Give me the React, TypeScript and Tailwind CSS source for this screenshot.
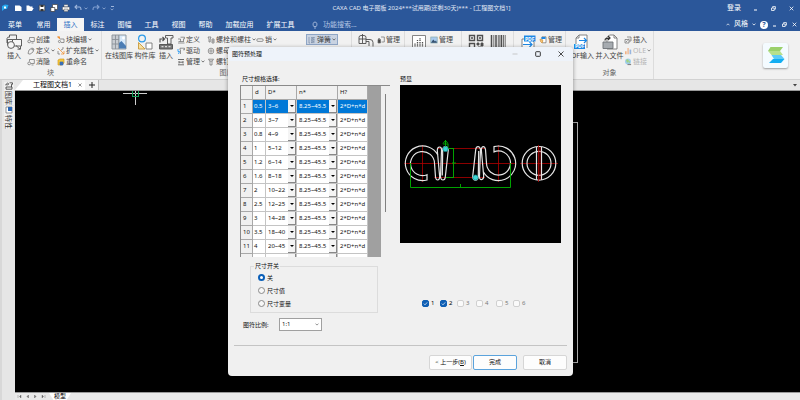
import React from "react";

type IconProps = { children: React.ReactNode; size?: string; box?: string };

const Glyph = ({ children, size = "size-[8px]", box = "0 0 8 8" }: IconProps) => (
  <svg viewBox={box} className={`${size} shrink-0`} fill="none" stroke="#6b6b6b" strokeWidth="0.7" aria-hidden="true">
    {children}
  </svg>
);

const Chevron = ({ className = "text-[#555]" }: { className?: string }) => (
  <svg viewBox="0 0 4 3" className={`w-[4px] h-[3px] shrink-0 ${className}`} fill="none" stroke="currentColor" strokeWidth="0.8" aria-hidden="true">
    <path d="M.5 .6 2 2.1 3.5 .6" />
  </svg>
);

const icons = {
  create: (
    <Glyph>
      <path d="M2.500 3.500V1.500h4.800v4H4" />
      <circle cx="2.2" cy="5.4" r="1.4" />
      <path d="M4.500 7h2" />
    </Glyph>
  ),
  define: (
    <Glyph>
      <path d="M1 6.5 2 3l3-2 2 1-1 3-3 2.2z" />
      <circle cx="5.3" cy="2.5" r=".5" />
    </Glyph>
  ),
  blockEdit: (
    <Glyph>
      <path d="M3 3h4v3.5H4" />
      <circle cx="2.5" cy="5.5" r="1.1" />
      <path d="M.5.8h2v2z" fill="#f08a24" stroke="#f08a24" />
    </Glyph>
  ),
  attrs: (
    <Glyph>
      <path d="M1 1l6 6M7 4v3H4" stroke="#f08a24" />
      <path d="M5 1h2M1 4v3h2M4 3l2-1" />
    </Glyph>
  ),
  rename: (
    <Glyph>
      <path d="M1 2l2-1h4v4l-2 2H1z" fill="#f5c83a" stroke="#d79b1f" />
      <path d="M3 4h3v3H3z" fill="#3b6fb6" stroke="#3b6fb6" />
    </Glyph>
  ),
  libDefine: (
    <Glyph>
      <path d="M1 7h6.500M1.500 5.500h5.500M3.500 5.500V3M3.500 1.200h4v1.600h-1v2.500M1 3h2.500" />
    </Glyph>
  ),
  drive: (
    <Glyph>
      <path d="M3.500 7V3.200H3V1.200h4.500v1.600H6" />
      <path d="M1 2v2.500h1.500L1.500 7" stroke="#3ba1f2" strokeWidth="1" />
    </Glyph>
  ),
  manage: (
    <Glyph>
      <path d="M1 1.500h6M1 6.8h6M2 3v2.5M6 3v2.5M2 4.2h4" strokeWidth="1" />
    </Glyph>
  ),
  bolt: (
    <Glyph>
      <path d="M1 1h3L3.2 3v3M1 1l1 2v3h1.2M5 3h2v4H5zM5 5h2" />
    </Glyph>
  ),
  nut: (
    <Glyph>
      <circle cx="4" cy="4" r="2.8" />
      <circle cx="4" cy="4" r="1.2" />
    </Glyph>
  ),
  screw: (
    <Glyph>
      <path d="M1.5 1.2h5L5.3 3H2.7zM3 3v4h2V3" />
    </Glyph>
  ),
  pin: (
    <Glyph>
      <rect x=".8" y="2.8" width="6.4" height="2.6" rx="1.2" />
    </Glyph>
  ),
  spring: (
    <Glyph>
      <path d="M1 1v6h1M3 1.5h3.5L3 3.2h3.5L3 5h3.5L3 6.6h3.5" stroke="#7b8ea6" />
    </Glyph>
  ),
  doc: (
    <Glyph>
      <path d="M4 1h3.300v5H4.500M3 2.500H1.500v2" />
      <path d="M1 3.500h2.500V7H1z" fill="#444" />
    </Glyph>
  ),
  image: (
    <Glyph>
      <rect x=".8" y="1" width="6.4" height="6" fill="#a9cbee" stroke="#8aa" />
      <path d="M1 6.8 3.2 3.6 5 5.6l1-1 1 2.2z" fill="#35506e" stroke="none" />
    </Glyph>
  ),
  pdfManage: (
    <Glyph>
      <path d="M3 .8h4v6H3z" fill="#fff" />
      <path d="M2.5 1h4v2h-4z" fill="#1e88e5" stroke="none" />
      <path d="M1 3l3 1.5L3 7 1.5 5.5z" fill="#f6c27a" stroke="#d99a3a" />
    </Glyph>
  ),
  insertObj: (
    <Glyph>
      <path d="M3 1h4v4H5M1 3.5h4V7H1z" />
      <path d="M2 6l1.5-1.5M5 2.5l1 1" />
    </Glyph>
  ),
  ole: (
    <Glyph>
      <path d="M1 4.2h1.6v3H1z" fill="#f2a36b" stroke="none" />
      <path d="M3.3 1h1.6v6.2H3.3z" fill="#efb48b" stroke="none" />
      <path d="M5.6 2.6h1.6v4.6H5.6z" fill="#82a8dc" stroke="none" />
    </Glyph>
  ),
  link: (
    <Glyph>
      <circle cx="4" cy="3.6" r="3" fill="#8cc6ee" stroke="none" />
      <path d="M2 2l2-1 1 2-2 2zM4 4l2-1v2z" fill="#8ecb6a" stroke="none" />
      <path d="M3.5 6.5h3.6" strokeWidth="1.2" />
    </Glyph>
  ),
};

const BigGlyph = ({ children }: { children: React.ReactNode }) => (
  <svg viewBox="0 0 16 16" className="size-[16px] shrink-0" fill="none" stroke="#4f4f4f" strokeWidth="0.9" aria-hidden="true">
    {children}
  </svg>
);

const big = {
  block: (
    <BigGlyph>
      <path d="M1 9V4.500A2 2 0 0 1 3 3M3.500 3.500V1h7v4" />
      <path d="M6.500 5.500h9V12h-9z" fill="#f6f6f6" />
      <path d="M1.500 5.500h5v5h-5z" fill="#f6f6f6" />
      <circle cx="5" cy="11" r="3.400" fill="#f6f6f6" />
      <path d="M10 11.500 14 15.200M11.500 15.200H14.500v-3" />
    </BigGlyph>
  ),
  online: (
    <BigGlyph>
      <path d="M1 1h7v14H1z" fill="#c9cdd2" stroke="#8b9299" />
      <path d="M1 5.500h7M1 10h7M4.500 1v14" stroke="#8b9299" />
      <path d="M8 1h7v14H8z" fill="#d7e9fa" stroke="#8b9299" />
      <path d="M8 14.500V9l2.500-2L15 12v2.500z" fill="#4c7db4" stroke="none" />
      <circle cx="12.500" cy="4" r="1.400" fill="#fff" stroke="none" />
    </BigGlyph>
  ),
  parts: (
    <BigGlyph>
      <circle cx="5" cy="4.500" r="3.400" stroke="#2d9be8" strokeWidth="1.200" />
      <path d="M1.500 8.500v6.500H8z" fill="#f7dfa0" stroke="#c89a3a" />
      <path d="M9 9h6v6H9z" fill="#fff" stroke="#777" />
    </BigGlyph>
  ),
  libInsert: (
    <BigGlyph>
      <path d="M2 8.500V5h4M4.500 3 6.500 5l-2 2" strokeWidth="1.100" />
      <path d="M7.500 1.500H15V4h-2v6H9.500V4h-2z" />
      <path d="M1.500 10.500h13v4.500h-13z" fill="#777" />
      <path d="M3.500 12.700h2M7 12.700h2M10.500 12.700h2" stroke="#fff" />
    </BigGlyph>
  ),
  part: (
    <BigGlyph>
      <path d="M1 9.500V3.500A2 2 0 0 1 3 1.500h3a2 2 0 0 1 2 2v6M1 5h7M4.500 0v9M8 5.500h4a3 3 0 0 1 3 3v4M1 9.500h7M8 7.500h3V12" />
    </BigGlyph>
  ),
  chart: (
    <BigGlyph>
      <path d="M1.500 1.500h13v13h-13z" fill="#fff" stroke="#777" />
      <path d="M4 14V9M6.500 14V6M9 14V4M11.500 14V8" strokeWidth="1.300" strokeDasharray="1.500 .8" />
    </BigGlyph>
  ),
  qr: (
    <BigGlyph>
      <path d="M1.500 1.500h5v5h-5zM9.500 1.500h5v5h-5zM1.500 9.500h5v5h-5z" strokeWidth="1.400" />
      <path d="M3.500 3.500h1v1h-1zM11.500 3.500h1v1h-1zM9 9h2v2H9zM13 9h2v3h-2zM10 13h3v2h-3z" fill="#4f4f4f" />
    </BigGlyph>
  ),
  barcode: (
    <BigGlyph>
      <path d="M1.500 1v14M6 1v14M11.500 1v14" strokeWidth="1.500" />
      <path d="M3.800 1v14M8.300 1v14M9.800 1v14M13.500 1v14M15.200 1v14" strokeWidth=".8" />
    </BigGlyph>
  ),
  pdf: (
    <BigGlyph>
      <path d="M2 5h9l3 3v7H2z" fill="#fff" stroke="#777" />
      <path d="M4 1.500h11.500v6H4z" fill="#1e88e5" stroke="none" />
      <text x="5" y="6.500" fontSize="5" fontWeight="700" fill="#fff" stroke="none">PDF</text>
      <path d="M3 10.500h9M9.500 8l2.500 2.500L9.500 13" stroke="#1e88e5" strokeWidth="1.200" />
    </BigGlyph>
  ),
  pdfIn: (
    <BigGlyph>
      <path d="M3 14V4l3-3h8v13" fill="#fff" stroke="#777" />
      <path d="M3 4h3V1" stroke="#777" />
      <path d="M6 6.500h7M11 4l2.500 2.500L11 9" stroke="#1e88e5" strokeWidth="1.200" />
      <path d="M1 10h11v5H1z" fill="#1e88e5" stroke="none" />
      <text x="2" y="14.300" fontSize="5" fontWeight="700" fill="#fff" stroke="none">PDF</text>
    </BigGlyph>
  ),
  merge: (
    <BigGlyph>
      <path d="M5 14V3.500L7.500 1H12l3 3v11H5" fill="#fff" stroke="#777" />
      <path d="M12 1v3h3" stroke="#777" />
      <path d="M3 6.500C3 4 5 4 8 4M6 2l2 2-2 2" strokeWidth="1.200" stroke="#333" />
      <path d="M1 8h10v6.500H1z" fill="#a6abb0" stroke="#6d7276" />
    </BigGlyph>
  ),
};

type ToolProps = { icon: React.ReactNode; label?: string; menu?: boolean; disabled?: boolean; active?: boolean };

const Tool = ({ icon, label, menu, disabled, active }: ToolProps) => (
  <button
    type="button"
    disabled={disabled}
    className={`flex h-[11px] items-center gap-px whitespace-nowrap text-[7px] leading-[11px] ${
      disabled ? "text-[#a8a8a8] opacity-80" : "text-[#444]"
    } ${active ? "border border-[#8fa6c6] bg-[#c9d3e2] px-px" : ""}`}
  >
    {icon}
    {label && <span>{label}</span>}
    {menu && <Chevron />}
  </button>
);

const BigTool = ({ icon, label, width }: { icon: React.ReactNode; label?: string; width: string }) => (
  <button
    type="button"
    className={`flex h-[33px] shrink-0 flex-col items-center gap-[1px] whitespace-nowrap text-[7px] leading-[9px] text-[#444] ${width}`}
  >
    {icon}
    <span>{label}</span>
  </button>
);

const Column = ({ children }: { children: React.ReactNode }) => <div className="flex shrink-0 flex-col items-start">{children}</div>;

const Group = ({ children, title, className }: { children: React.ReactNode; title?: string; className: string }) => (
  <section className={`flex shrink-0 flex-col border-r border-[#dcdcdc] pt-[3px] ${className}`}>
    <div className="flex h-[33px]">{children}</div>
    <div className="h-[12px] text-center text-[7px] leading-[12px] text-[#666]">{title}</div>
  </section>
);

const QuickAccess = () => (
  <div className="flex items-center gap-[4px]" aria-label="快速访问">
    <span className="mr-px">
      <Glyph>
        <path d="M1 7V2l3-1.500L7.500 1 6 5 3.500 5z" fill="#25a8f0" stroke="none" />
        <path d="M3 2.500h2v2H3z" fill="#fff" stroke="none" />
      </Glyph>
    </span>
    <Glyph>
      <path d="M1 1.500h4.500L7.500 3v4H1z" fill="#fff" stroke="none" />
    </Glyph>
    <Glyph>
      <path d="M.5 7V1.500h2.500l1 1h2.500V4h1.200L6 7z" fill="#fff" stroke="none" />
    </Glyph>
    <Glyph>
      <path d="M1.200 1.200h5.600v5.600H1.200z" fill="#fff" stroke="#333" />
      <path d="M2.500 1h3v2h-3zM2.500 5h3v2h-3z" fill="#333" stroke="none" />
    </Glyph>
    <Glyph>
      <path d="M2.500.5h5v5h-5z" fill="#fff" stroke="#444" />
      <path d="M.8 3.500h4v4h-4z" fill="#fff" stroke="#333" />
    </Glyph>
    <Glyph>
      <path d="M2 .8h4v2H2zM.5 3h7v3h-7zM2 5h4v2.500H2z" fill="#fff" stroke="#444" strokeWidth=".4" />
    </Glyph>
    <span className="flex items-center gap-[2px]">
      <Glyph>
        <path d="M3 1 1 3l2 2M1 3h4.500Q7 3 7 6" stroke="#9db5dc" strokeWidth="1.100" />
      </Glyph>
      <Chevron className="text-[#9db5dc]" />
    </span>
    <span className="flex items-center gap-[2px]">
      <Glyph>
        <path d="m5 1 2 2-2 2M7 3H2.500Q1 3 1 6" stroke="#7f9dcf" strokeWidth="1.100" />
      </Glyph>
      <Chevron className="text-[#9db5dc]" />
    </span>
    <span className="flex flex-col items-center gap-px">
      <span className="h-px w-[3px] bg-[#9db5dc]" />
      <Chevron className="text-[#9db5dc]" />
    </span>
  </div>
);

const WindowButtons = ({ className }: { className: string }) => (
  <div className={`flex items-center text-white ${className}`}>
    <button type="button" aria-label="最小化"><svg viewBox="0 0 5 5" className="size-[5px]" stroke="currentColor"><path d="M1 4h3" /></svg></button>
    <button type="button" aria-label="还原"><svg viewBox="0 0 5 5" className="size-[5px]" fill="none" stroke="currentColor" strokeWidth=".8"><path d="M.5 2h2.700v2.500H.5zM1.600 1.800V.6h2.800v2.600h-1" /></svg></button>
    <button type="button" aria-label="关闭"><svg viewBox="0 0 5 5" className="size-[5px]" stroke="currentColor" strokeWidth=".8"><path d="m.7.7 3.600 3.600M4.300.7.7 4.300" /></svg></button>
  </div>
);

const menuTabs = [
  { name: "菜单", width: "w-[30px]" },
  { name: "常用", width: "w-[27px]" },
  { name: "插入", width: "w-[27px]", active: true },
  { name: "标注", width: "w-[27px]" },
  { name: "图幅", width: "w-[27px]" },
  { name: "工具", width: "w-[27px]" },
  { name: "视图", width: "w-[27px]" },
  { name: "帮助", width: "w-[27px]" },
  { name: "加载应用", width: "w-[41px]" },
  { name: "扩展工具", width: "w-[41px]" },
];

const Header = () => (
  <header className="bg-[#2b579a] text-white">
    <div className="grid h-[14px] grid-cols-[1fr_auto_1fr] items-center pt-[2px] pl-px text-[7px]">
      <QuickAccess />
      <h1 className="whitespace-nowrap pl-[42px] text-[6px] text-[#e2e9f5]">CAXA CAD 电子图板 2024***试用期(还剩30天)*** - [工程图文档1]</h1>
      <div className="flex items-center justify-end gap-[12px] pr-[6px]">
        <button type="button">登录</button>
        <WindowButtons className="gap-[13px]" />
      </div>
    </div>
    <div className="flex h-[17px] items-end text-[7px]">
      <nav className="flex">
        {menuTabs.map((t) => (
          <button
            key={t.name}
            type="button"
            className={`h-[13px] text-center leading-[13px] ${t.width} ${t.active ? "bg-[#f5f5f5] text-[#2b6fc4]" : ""}`}
          >
            {t.name}
          </button>
        ))}
      </nav>
      <label className="flex h-[13px] flex-1 items-center gap-[4px] pl-[10px]">
        <Glyph>
          <path d="M2.800 5.500C1.500 4.200 1.800 1 4 1s2.500 3.200 1.200 4.500zM3 7h2" stroke="#c8d6ec" />
        </Glyph>
        <input type="text" placeholder="功能搜索..." className="w-[60px] bg-transparent text-[7px] leading-[9px] outline-none placeholder:text-[#b4c6e4]" />
      </label>
      <div className="flex h-[13px] items-center gap-[4px] pr-[3px]">
        <svg viewBox="0 0 4 3" className="h-[3px] w-[4px]" fill="none" stroke="#fff" strokeWidth=".7"><path d="M.5 2.300 2 .8l1.500 1.500" /></svg>
        <button type="button" className="flex items-center gap-[4px]">风格<Chevron className="text-white" /></button>
        <button type="button" className="flex size-[8px] items-center justify-center rounded-full bg-white text-[7px] font-bold leading-[8px] text-[#2b579a]">?</button>
        <WindowButtons className="gap-[5px]" />
      </div>
    </div>
  </header>
);

const Ribbon = () => (
  <div className="flex h-[49px] overflow-hidden border-b border-[#d2d2d2] bg-[#f1f1f1]">
    <Group title="块" className="w-[102px]">
      <BigTool icon={big.block} label="插入" width="w-[27px] pl-px" />
      <div className="w-[30px] shrink-0">
        <Column>
          <Tool icon={icons.create} label="创建" />
          <Tool icon={icons.define} label="定义" menu />
          <Tool icon={icons.create} label="消隐" />
        </Column>
      </div>
      <Column>
        <Tool icon={icons.blockEdit} label="块编辑" menu />
        <Tool icon={icons.attrs} label="扩充属性" menu />
        <Tool icon={icons.rename} label="重命名" />
      </Column>
    </Group>
    <Group title="图库" className="w-[250px]">
      <BigTool icon={big.online} label="在线图库" width="w-[32px] ml-[1px]" />
      <BigTool icon={big.parts} label="构件库" width="w-[20px]" />
      <BigTool icon={big.libInsert} label="插入" width="w-[22px]" />
      <div className="w-[30px] shrink-0">
        <Column>
          <Tool icon={icons.libDefine} label="定义" />
          <Tool icon={icons.drive} label="驱动" />
          <Tool icon={icons.manage} label="管理" menu />
        </Column>
      </div>
      <div className="w-[49px] shrink-0">
        <Column>
          <Tool icon={icons.bolt} label="螺栓和螺柱" menu />
          <Tool icon={icons.nut} label="螺母" menu />
          <Tool icon={icons.screw} label="螺钉" menu />
        </Column>
      </div>
      <div className="w-[50px] shrink-0">
        <Tool icon={icons.pin} label="销" menu />
      </div>
      <Column>
        <Tool icon={icons.spring} label="弹簧" menu active />
      </Column>
    </Group>
    <Group className="w-[53px]">
      <BigTool icon={big.part} width="w-[25px] pl-[3px]" />
      <Column><Tool icon={icons.doc} label="管理" /></Column>
    </Group>
    <Group className="w-[57px]">
      <BigTool icon={big.chart} width="w-[25px] pl-[2px]" />
      <Column><Tool icon={icons.image} label="管理" /></Column>
    </Group>
    <Group className="w-[52px]">
      <BigTool icon={big.qr} width="w-[26px] pl-[2px]" />
      <BigTool icon={big.barcode} width="w-[20px]" />
    </Group>
    <Group className="w-[52px]">
      <BigTool icon={big.pdf} width="w-[25px] pl-[2px]" />
      <Column><Tool icon={icons.pdfManage} label="管理" /></Column>
    </Group>
    <Group title="对象" className="w-[88px]">
      <BigTool icon={big.pdfIn} label="PDF输入" width="w-[29px]" />
      <BigTool icon={big.merge} label="并入文件" width="w-[29px]" />
      <Column>
        <Tool icon={icons.insertObj} label="插入" />
        <Tool icon={icons.ole} label="OLE" menu disabled />
        <Tool icon={icons.link} label="链接" disabled />
      </Column>
    </Group>
    <div className="flex flex-1 items-center justify-end pr-[12px]">
      <div className="flex size-[25px] items-center justify-center rounded-[2px] bg-[#f4fbff] shadow-[0_1px_2px_rgba(0,0,0,0.35)]">
        <svg viewBox="0 0 18 18" className="size-[18px]" aria-hidden="true">
          <path d="M3.500 1H16l-3 4H1z" fill="#9ad06b" />
          <path d="M1 5h12l3 4H4.500z" fill="#b7e08c" />
          <path d="M4.500 9H14l3.500 4H7z" fill="#5ccbf8" />
          <path d="M17.500 13 14 17H2l4-4z" fill="#12aef2" />
        </svg>
      </div>
    </div>
  </div>
);

const SideTab = ({ icon, name }: { icon: React.ReactNode; name: string }) => (
  <button type="button" className="flex w-[10px] flex-col items-center gap-px bg-[#f0f0f0]">
    {icon}
    <span className="whitespace-nowrap [text-orientation:sideways] [writing-mode:vertical-rl]">{name}</span>
  </button>
);

const Sidebar = () => (
  <aside className="flex w-[15px] shrink-0 flex-col items-center gap-px border-l-2 border-[#d8d8d8] bg-[#e6e6e6] pt-[2px] text-[7px] leading-[9px] text-[#333]">
    <SideTab
      name="图库"
      icon={
        <Glyph>
          <path d="M1 3.500V2h2M2.500.8 3.800 2 2.500 3.200M4.500.8h3v1.500h-1V5M1 5h6v2.200H1z" stroke="#222" />
        </Glyph>
      }
    />
    <SideTab
      name="特性"
      icon={
        <Glyph>
          <path d="M1 1h6v6H1z" fill="#fff" />
          <path d="M3 1h4v4H3z" fill="#2a66b5" stroke="none" />
        </Glyph>
      }
    />
  </aside>
);

const DocumentTabs = () => (
  <div className="flex h-[11px] shrink-0 items-stretch border-b border-[#999] bg-[#e6e6e6] text-[7px] leading-[10px]">
    <div className="flex w-[70px] items-center justify-end gap-[6px] bg-white pr-[3px] text-black [clip-path:polygon(8px_0,100%_0,100%_100%,0_100%)]">
      <span className="whitespace-nowrap">工程图文档1</span>
      <button type="button" aria-label="关闭文档">
        <svg viewBox="0 0 4 4" className="size-[4px]" stroke="#666" strokeWidth=".7"><path d="m.5.5 3 3M3.500.5l-3 3" /></svg>
      </button>
    </div>
    <button type="button" aria-label="新建文档" className="flex w-[14px] items-center justify-center border-r border-[#bbb] bg-[#f3f3f3]">
      <svg viewBox="0 0 6 6" className="size-[6px]" stroke="#222"><path d="M3 0v6M0 3h6" /></svg>
    </button>
    <div className="flex flex-1 items-center justify-end pr-[3px]">
      <svg viewBox="0 0 4 3" className="h-[3px] w-[4px]" fill="#444"><path d="M0 0h4L2 2.500z" /></svg>
    </div>
  </div>
);

const DrawingCanvas = () => (
  <div className="min-h-0 flex-1 overflow-hidden bg-black">
    <svg width="600" height="301" viewBox="0 0 600 301" fill="none" shapeRendering="crispEdges" aria-hidden="true">
      <path d="M230 31.500h332.500v240H230" stroke="#a8a8a8" />
      <path d="M108 2.500h24M120.500 0v14" stroke="#cfcfcf" />
      <path d="M117.500 0v5h6V0M120 2.500h1" stroke="#14a05a" />
    </svg>
  </div>
);

const StatusTabs = () => (
  <footer className="flex h-[8px] shrink-0 items-center border-t border-[#999] bg-[#e9e9e9] pl-[2px] text-[6px] leading-[7px]">
    {["M1 1v3M4 1 2.500 2.500 4 4z", "M3.500 1 2 2.500l1.500 1.500z", "M1.500 1 3 2.500 1.500 4z", "M4 1v3M1 1l1.500 1.500L1 4z"].map((d) => (
      <svg key={d} viewBox="0 0 5 5" className="mr-[3px] size-[5px]" fill="#666" stroke="#666" strokeWidth=".4"><path d={d} /></svg>
    ))}
    <button type="button" className="h-[7px] w-[22px] overflow-hidden bg-white text-center text-black [clip-path:polygon(0_0,100%_0,80%_100%,20%_100%)]">模型</button>
  </footer>
);

const sizeRows = [
  ["0.5", "3~6"], ["0.6", "3~7"], ["0.8", "4~9"], ["1", "5~12"], ["1.2", "6~14"], ["1.6", "8~18"],
  ["2", "10~22"], ["2.5", "12~25"], ["3", "14~28"], ["3.5", "18~40"], ["4", "20~45"], ["4.5", "22~50"],
];

const CellSelect = ({ value, label, selected }: { value: string; label: string; selected: boolean }) => (
  <div className="grid h-[13px] grid-cols-1 items-center">
    <select aria-label={label} defaultValue={value} className={`col-start-1 row-start-1 h-[13px] w-full appearance-none pl-[2px] leading-[13px] outline-none ${selected ? "bg-[#0078d7] text-white" : "bg-white text-[#111]"}`}>
      <option>{value}</option>
    </select>
    <span className="pointer-events-none col-start-1 row-start-1 flex h-[13px] w-[8px] items-center justify-center justify-self-end border-r border-b border-[#888] bg-[#f4f4f4]">
      <svg viewBox="0 0 4 2" className="h-[2px] w-[4px]" fill="#000"><path d="M0 0h4L2 2z" /></svg>
    </span>
  </div>
);

const headCell = "h-[14px] border-r border-b border-[#a8a8a8] bg-[#f0f0f0] p-0 pl-[2px] text-left font-normal";
const cell = "h-[14px] border-r border-b border-[#c4c4c4] p-0";

const SizeTable = () => (
  <div className="flex h-[172px] w-[150px] overflow-hidden border-t border-l border-[#8a8a8a] bg-[#a0a0a0]">
    <table className="h-fit w-[127px] shrink-0 table-fixed border-separate border-spacing-0 bg-white text-[6px] leading-[13px] text-[#111]">
      <colgroup>
        <col className="w-[12px]" />
        <col className="w-[13px]" />
        <col className="w-[31px]" />
        <col className="w-[41px]" />
        <col className="w-[30px]" />
      </colgroup>
      <thead>
        <tr>
          <th className={headCell} />
          <th className={headCell}>d</th>
          <th className={headCell}>D*</th>
          <th className={headCell}>n*</th>
          <th className={headCell}>H?</th>
        </tr>
      </thead>
      <tbody>
        {sizeRows.map(([d, range], i) => {
          const sel = i === 0;
          const tone = sel ? "bg-[#0078d7] text-white" : "bg-white";
          return (
            <tr key={d}>
              <th scope="row" className={`${headCell} whitespace-nowrap`}>{i + 1}</th>
              <td className={`${cell} ${tone} pl-px`}>{d}</td>
              <td className={cell}><CellSelect label={`D* ${d}`} value={range} selected={sel} /></td>
              <td className={cell}><CellSelect label={`n* ${d}`} value="8.25~45.5" selected={sel} /></td>
              <td className={`${cell} ${tone} whitespace-nowrap pl-[2px]`}>2*D+n*d</td>
            </tr>
          );
        })}
      </tbody>
    </table>
    <div className="ml-auto w-[9px] bg-[#f0f0f0] pt-[8px] pl-[4px]">
      <div className="h-[118px] w-px bg-[#808080]" />
    </div>
  </div>
);

const springHalf = (
  <path d="M38 70.300A17.300 17.300 0 1 0 27 95V89.700A12 12 0 1 1 34.500 78.300L35.500 92Q36 95 37.700 95T39.700 92L37.300 65.500Q37.300 62 39.500 62T41.500 65.500L40.500 92Q41 95 43 95T45.300 92L48.300 65Q48 61.500 45.500 61.500T42.700 65L42.300 90.500" />
);

const Preview = () => (
  <svg viewBox="0 0 161 158" className="h-[158px] w-[161px] bg-black" fill="none" role="img" aria-label="预显">
    <g stroke="#b00000" strokeWidth=".8">
      <path d="M4 78.500h112M120 78.500h38M22.500 60v37M98.500 60v37M38 63.500h47M34 92.500h51" />
    </g>
    <g stroke="#e4e4e4" strokeWidth="1.200">
      {springHalf}
      <g transform="rotate(180 60.500 78.300)">{springHalf}</g>
      <circle cx="139" cy="78.300" r="16.800" />
      <circle cx="139" cy="78.300" r="12" />
      <path d="M136.500 62v33M141.500 62v33" />
    </g>
    <path d="M138.500 60v37M140 62v33" stroke="#b00000" strokeWidth=".8" />
    <g stroke="#00b400" strokeWidth=".9">
      <path d="M10.500 78v24.500h100V78M46 63.500h8M46 92.500h8M53.500 63.500v29M45.500 55v8M43 58.500l2.500-3 2.500 3M43 59h5v3M60.500 99v3M52 78h4" />
    </g>
    <g fill="#3fd6d6" stroke="#0a8f8f" strokeWidth=".6">
      <circle cx="45.500" cy="64" r="2.600" />
      <circle cx="75.500" cy="92.500" r="2.600" />
    </g>
  </svg>
);

const checks = [
  { n: 1, on: true, width: "w-[18px]" },
  { n: 2, on: true, width: "w-[17px]" },
  { n: 3, on: false, width: "w-[19px]" },
  { n: 4, on: false, width: "w-[20px]" },
  { n: 5, on: false, width: "w-[17px]" },
  { n: 6, on: false, width: "w-[17px]" },
];

const ViewCheck = ({ n, on, width }: { n: number; on: boolean; width: string }) => (
  <label className={`flex items-center gap-[2px] ${width} ${on ? "text-black" : "text-[#777]"}`}>
    <span className="grid size-[7px] place-items-center">
      <input
        type="checkbox"
        defaultChecked={on}
        disabled={!on}
        className="col-start-1 row-start-1 size-[7px] appearance-none rounded-[2px] border border-[#d0d0d0] bg-[#fafafa] checked:border-[#0f5fb4] checked:bg-[#0f5fb4]"
      />
      {on && (
        <svg viewBox="0 0 5 5" className="pointer-events-none col-start-1 row-start-1 size-[5px]" fill="none" stroke="#fff" strokeWidth=".7"><path d="M.8 2.600 2 3.800 4.200 1.400" /></svg>
      )}
    </span>
    {n}
  </label>
);

const dialogButton = "h-[15px] rounded-[2px] border bg-[#fdfdfd] text-center leading-[13px] whitespace-nowrap";

const SymbolDialog = () => (
  <div
    role="dialog"
    aria-label="图符预处理"
    className="absolute top-[47px] left-[228px] w-[345px] overflow-hidden rounded-[4px] bg-[#f0f0f0] text-[6px] leading-[8px] text-[#111] shadow-[0_1px_4px_rgba(0,0,0,0.4)]"
  >
    <div className="flex h-[14px] items-center justify-between bg-[#eef3fa] pr-[9px] pl-[4px]">
      <h2>图符预处理</h2>
      <div className="flex items-center gap-[17px]">
        <button type="button" aria-label="最小化" disabled><svg viewBox="0 0 6 6" className="size-[6px]" stroke="#bbb" strokeWidth=".8"><path d="M.5 3h5" /></svg></button>
        <button type="button" aria-label="最大化"><svg viewBox="0 0 6 6" className="size-[6px]" fill="none" stroke="#222" strokeWidth=".9"><rect x=".7" y=".7" width="4.600" height="4.600" rx=".6" /></svg></button>
        <button type="button" aria-label="关闭"><svg viewBox="0 0 6 6" className="size-[6px]" stroke="#222" strokeWidth=".8"><path d="m.5.5 5 5M5.500.5l-5 5" /></svg></button>
      </div>
    </div>
    <div className="flex pt-[14px] pl-[12px]">
      <div className="w-[160px]">
        <h3 className="mb-[2px] pl-[2px]">尺寸规格选择:</h3>
        <SizeTable />
        <fieldset className="mt-[5px] ml-[10px] w-[128px] border border-[#dcdcdc] pt-px pb-[2px] pl-[7px]">
          <legend className="-ml-[4px] px-px">尺寸开关</legend>
          {["关", "尺寸值", "尺寸变量"].map((name, i) => (
            <label key={name} className="flex h-[13px] items-center gap-[2px]">
              <input
                type="radio"
                name="dim"
                defaultChecked={i === 0}
                className="size-[7px] appearance-none rounded-full border border-[#8a8a8a] bg-[#f7f7f7] checked:border-2 checked:border-[#0a5fb8] checked:bg-white"
              />
              {name}
            </label>
          ))}
        </fieldset>
        <div className="mt-[5px] flex items-center gap-[6px] pl-[3px]">
          <label htmlFor="scale" className="w-[30px] whitespace-nowrap">图符比例:</label>
          <div className="grid w-[43px] items-center">
            <select id="scale" className="col-start-1 row-start-1 h-[13px] w-full appearance-none border border-[#a0a0a0] bg-white pl-[2px] leading-[11px]" defaultValue="1:1">
              <option>1:1</option>
            </select>
            <span className="pointer-events-none col-start-1 row-start-1 justify-self-end pr-[3px]"><Chevron className="text-[#777]" /></span>
          </div>
        </div>
      </div>
      <div>
        <h3 className="mb-[2px]">预显</h3>
        <Preview />
        <div className="mt-[56px] flex pl-[22px]">
          {checks.map((c) => (
            <ViewCheck key={c.n} {...c} />
          ))}
        </div>
      </div>
    </div>
    <div className="mx-[6px] mt-[14px] flex justify-end border-t border-[#c4c4c4] pt-[9px] pb-[6px]">
      <button type="button" className={`${dialogButton} mr-px w-[43px] border-[#d6d6d6]`}>&lt; 上一步(<u>B</u>)</button>
      <button type="button" className={`${dialogButton} mr-[6px] w-[44px] border-[#5ba3dc]`}>完成</button>
      <button type="button" className={`${dialogButton} w-[44px] border-[#d6d6d6]`}>取消</button>
    </div>
  </div>
);

export default function App() {
  return (
    <div className="relative flex h-screen w-full flex-col overflow-hidden bg-[#e6e6e6] font-['Noto_Sans','Noto_Sans_CJK_SC',sans-serif]">
      <Header />
      <Ribbon />
      <main className="flex min-h-0 flex-1">
        <Sidebar />
        <div className="flex min-w-0 flex-1 flex-col">
          <DocumentTabs />
          <DrawingCanvas />
          <StatusTabs />
        </div>
      </main>
      <SymbolDialog />
    </div>
  );
}
